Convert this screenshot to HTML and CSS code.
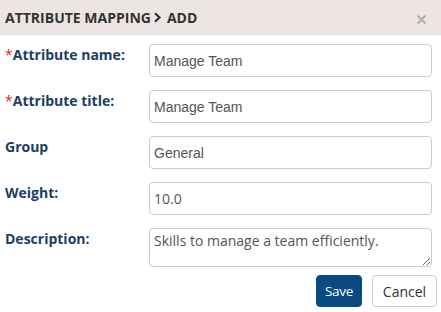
FILE: index.html
```html
<!DOCTYPE html>
<html>
<head>
<meta charset="utf-8">
<link rel="stylesheet" href="styles.css">
</head>
<body>
<div class="modal">
  <div class="modal-header">
    <h4 class="title">ATTRIBUTE MAPPING<svg class="chev" width="9" height="11" viewBox="0 0 9 11"><path d="M2 1.2 L6.5 5.5 L2 9.8" fill="none" stroke="#333" stroke-width="2.2"/></svg>ADD</h4>
    <button class="close" type="button" aria-label="Close"><svg width="11" height="11" viewBox="0 0 11 11"><path d="M1.5 1.5 L9.5 9.5 M9.5 1.5 L1.5 9.5" stroke="#b5b0af" stroke-width="2.2"/></svg></button>
  </div>
  <div class="modal-body">
    <form class="form">
      <label class="label"><span class="req">*</span>Attribute name:</label>
      <input class="input arial" type="text" value="Manage Team">
      <label class="label"><span class="req">*</span>Attribute title:</label>
      <input class="input arial" type="text" value="Manage Team">
      <label class="label">Group</label>
      <input class="input arial" type="text" value="General">
      <label class="label">Weight:</label>
      <input class="input open" type="text" value="10.0">
      <label class="label">Description:</label>
      <textarea class="input textarea open">Skills to manage a team efficiently.</textarea>
    </form>
    <div class="actions">
      <button class="btn btn-primary" type="button">Save</button>
      <button class="btn btn-default" type="button">Cancel</button>
    </div>
  </div>
</div>
</body>
</html>
```
FILE: styles.css
```css
html, body {
  margin: 0;
  padding: 0;
  background: #fff;
}
body {
  font-family: "Open Sans", "Liberation Sans", sans-serif;
}
.modal {
  width: 441px;
}
.modal-header {
  height: 35px;
  background: #ede5e3;
  border-bottom: 1px solid #e2dcdb;
  display: flex;
  align-items: center;
  justify-content: space-between;
  padding: 0 14px 0 5px;
  box-sizing: border-box;
}
.title {
  margin: 0;
  font-size: 14px;
  font-weight: 700;
  color: #333;
  display: flex;
  align-items: center;
  letter-spacing: 0;
  padding-top: 1px;
}
.chev {
  margin: 0 5px 0 2px;
}
.close {
  border: 0;
  background: none;
  padding: 0;
  margin-top: 4px;
  width: 11px;
  height: 11px;
  display: flex;
}
.modal-body {
  padding: 9px 4px 0 5px;
}
.form {
  display: grid;
  grid-template-columns: 144px 283px;
  row-gap: 13px;
  margin: 0;
}
.label {
  font-size: 14px;
  font-weight: 700;
  color: #1b3d66;
  line-height: 19px;
  padding-top: 1px;
  white-space: nowrap;
}
.req {
  color: #e8262b;
  font-weight: 400;
}
.input {
  height: 33px;
  box-sizing: border-box;
  border: 1px solid #ccc;
  border-radius: 4px;
  padding: 0 4px;
  font-size: 14px;
  color: #555;
  background: #fff;
  margin: 0;
  width: 283px;
}
.arial {
  font-family: "Liberation Sans", Arial, sans-serif;
}
.open {
  font-family: "Open Sans", sans-serif;
}
.textarea {
  height: 39px;
  padding: 2px 4px;
  line-height: 20px;
  resize: vertical;
  display: block;
}
.actions {
  display: flex;
  justify-content: flex-end;
  gap: 10px;
  margin-top: 8px;
}
.btn {
  height: 32px;
  box-sizing: border-box;
  border-radius: 4px;
  font-family: "Open Sans", sans-serif;
  font-size: 14px;
  padding: 0;
  cursor: pointer;
  text-align: center;
}
.btn-primary {
  width: 46px;
  background: #0a4a83;
  border: 1px solid #0a4a83;
  color: #fff;
  font-size: 13.5px;
  letter-spacing: -0.3px;
}
.btn-default {
  width: 65px;
  background: #fff;
  border: 1px solid #ccc;
  color: #333;
}
```
